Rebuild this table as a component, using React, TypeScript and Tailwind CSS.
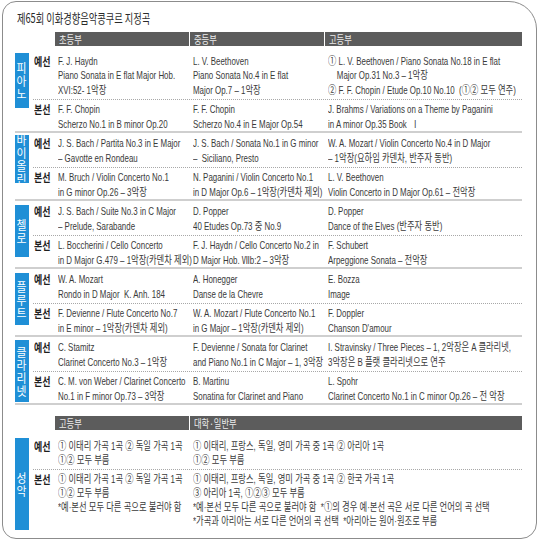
import React from "react";

type Row = { label: string; cols: string[][] };
type Group = { name: string[]; tabTop: number; tabH: number; rows: Row[] };

const groups: Group[] = [
  {
    name: ["피", "아", "노"],
    tabTop: 2,
    tabH: 55,
    rows: [
      {
        label: "예선",
        cols: [
          ["F. J. Haydn", "Piano Sonata in E flat Major Hob.", "XVI:52- 1악장"],
          ["L. V. Beethoven", "Piano Sonata No.4 in E flat", "Major Op.7 – 1악장"],
          [
            "① L. V. Beethoven / Piano Sonata No.18 in E flat",
            "    Major Op.31 No.3 – 1악장",
            "② F. F. Chopin / Etude Op.10 No.10  (①② 모두 연주)",
          ],
        ],
      },
      {
        label: "본선",
        cols: [
          ["F. F. Chopin", "Scherzo No.1 in B minor Op.20"],
          ["F. F. Chopin", "Scherzo No.4 in E Major Op.54"],
          ["J. Brahms / Variations on a Theme by Paganini", "in A minor Op.35 Book  Ⅰ"],
        ],
      },
    ],
  },
  {
    name: ["바", "이", "올", "린"],
    tabTop: 2,
    tabH: 48,
    rows: [
      {
        label: "예선",
        cols: [
          ["J. S. Bach / Partita No.3 in E Major", "– Gavotte en Rondeau"],
          ["J. S. Bach / Sonata No.1 in G minor", "–  Siciliano, Presto"],
          ["W. A. Mozart / Violin Concerto No.4 in D Major", "– 1악장(요하임 카덴차, 반주자 동반)"],
        ],
      },
      {
        label: "본선",
        cols: [
          ["M. Bruch / Violin Concerto No.1", "in G minor Op.26 – 3악장"],
          ["N. Paganini / Violin Concerto No.1", "in D Major Op.6 – 1악장(카덴차 제외)"],
          ["L. V. Beethoven", "Violin Concerto in D Major Op.61 – 전악장"],
        ],
      },
    ],
  },
  {
    name: ["첼", "로"],
    tabTop: 4,
    tabH: 52,
    rows: [
      {
        label: "예선",
        cols: [
          ["J. S. Bach / Suite No.3 in C Major", "– Prelude, Sarabande"],
          ["D. Popper", "40 Etudes Op.73 중 No.9"],
          ["D. Popper", "Dance of the Elves (반주자 동반)"],
        ],
      },
      {
        label: "본선",
        cols: [
          ["L. Boccherini / Cello Concerto", "in D Major G.479 – 1악장(카덴차 제외)"],
          ["F. J. Haydn / Cello Concerto No.2 in", "D Major Hob. Ⅶb:2 – 3악장"],
          ["F. Schubert", "Arpeggione Sonata – 전악장"],
        ],
      },
    ],
  },
  {
    name: ["플", "루", "트"],
    tabTop: 4,
    tabH: 52,
    rows: [
      {
        label: "예선",
        cols: [
          ["W. A. Mozart", "Rondo in D Major  K. Anh. 184"],
          ["A. Honegger", "Danse de la Chevre"],
          ["E. Bozza", "Image"],
        ],
      },
      {
        label: "본선",
        cols: [
          ["F. Devienne / Flute Concerto No.7", "in E minor – 1악장(카덴차 제외)"],
          ["W. A. Mozart / Flute Concerto No.1", "in G Major – 1악장(카덴차 제외)"],
          ["F. Doppler", "Chanson D'amour"],
        ],
      },
    ],
  },
  {
    name: ["클", "라", "리", "넷"],
    tabTop: 3,
    tabH: 62,
    rows: [
      {
        label: "예선",
        cols: [
          ["C. Stamitz", "Clarinet Concerto No.3 – 1악장"],
          ["F. Devienne / Sonata for Clarinet", "and Piano No.1 in C Major – 1, 3악장"],
          ["I. Stravinsky / Three Pieces – 1, 2악장은 A 클라리넷,", "3악장은 B 플랫 클라리넷으로 연주"],
        ],
      },
      {
        label: "본선",
        cols: [
          ["C. M. von Weber / Clarinet Concerto", "No.1 in F minor Op.73 – 3악장"],
          ["B. Martinu", "Sonatina for Clarinet and Piano"],
          ["L. Spohr", "Clarinet Concerto No.1 in C minor Op.26 – 전 악장"],
        ],
      },
    ],
  },
];

const vocalRows: Row[] = [
  {
    label: "예선",
    cols: [
      ["① 이태리 가곡 1곡 ② 독일 가곡 1곡", "①② 모두 부름"],
      ["① 이태리, 프랑스, 독일, 영미 가곡 중 1곡 ② 아리아 1곡", "①② 모두 부름"],
    ],
  },
  {
    label: "본선",
    cols: [
      ["① 이태리 가곡 1곡 ② 독일 가곡 1곡", "①② 모두 부름", "*예·본선 모두 다른 곡으로 불러야 함"],
      [
        "① 이태리, 프랑스, 독일, 영미 가곡 중 1곡 ② 한국 가곡 1곡",
        "③ 아리아 1곡, ①②③ 모두 부름",
        "*예·본선 모두 다른 곡으로 불러야 함  *①의 경우 예·본선 곡은 서로 다른 언어의 곡 선택",
        "*가곡과 아리아는 서로 다른 언어의 곡 선택  *아리아는 원어·원조로 부름",
      ],
    ],
  },
];

const HANGUL = /([\u3131-\u318E\uAC00-\uD7A3\u2460-\u2473]+)/;

function Txt({ s }: { s: string }) {
  const parts = s.split(HANGUL);
  return (
    <>
      {parts.map((p, i) =>
        i % 2 === 1 ? (
          <span key={i} className="text-[11.5px] leading-none font-['Noto_Sans_CJK_KR',sans-serif]">
            {p}
          </span>
        ) : (
          <React.Fragment key={i}>{p}</React.Fragment>
        )
      )}
    </>
  );
}

function Lines({ lines, lh }: { lines: string[]; lh: string }) {
  return (
    <div className="origin-left scale-x-[0.72] w-max">
      {lines.map((l, i) => (
        <div key={i} className={"whitespace-pre overflow-visible " + lh}>
          <Txt s={l} />
        </div>
      ))}
    </div>
  );
}

function Tab({ chars, top, h }: { chars: string[]; top: number; h: number }) {
  return (
    <div
      className="w-[14px] shrink-0 self-start bg-[#1f8fd6] flex flex-col items-center justify-center text-white text-[12px] font-['Noto_Sans_CJK_KR',sans-serif]"
      style={{ marginTop: top, height: h }}
    >
      {chars.map((c, i) => (
        <div key={i} className="h-[13px] leading-[13px] origin-center scale-x-[0.9]">
          {c}
        </div>
      ))}
    </div>
  );
}

function Label({ text, lh }: { text: string; lh: string }) {
  return (
    <div className={"w-[26px] shrink-0 pl-[5px] " + lh}>
      <div className="origin-left scale-x-[0.78] font-bold text-[#1e1e1e] text-[11.5px] font-['Noto_Sans_CJK_KR',sans-serif] whitespace-nowrap">
        {text}
      </div>
    </div>
  );
}

function RowLine({ r, first, lh, three }: { r: Row; first: boolean; lh: string; three: boolean }) {
  return (
    <div className="flex flex-col">
      {!first && <div className="ml-[4px] border-t border-dotted border-[#a8a8a8]" />}
      <div className={"flex " + (first ? "pb-[2px]" : "pt-[2px]")}>
        <Label text={r.label} lh={lh} />
        <div className="w-[135px] shrink-0 pl-[3px]">
          <Lines lines={r.cols[0]} lh={lh} />
        </div>
        {three ? (
          <>
            <div className="w-[135px] shrink-0 pl-[3px]">
              <Lines lines={r.cols[1]} lh={lh} />
            </div>
            <div className="flex-1 min-w-0 pl-[3px]">
              <Lines lines={r.cols[2]} lh={lh} />
            </div>
          </>
        ) : (
          <div className="flex-1 min-w-0 pl-[3px]">
            <Lines lines={r.cols[1]} lh={lh} />
          </div>
        )}
      </div>
    </div>
  );
}

function InstrumentGroup({ g }: { g: Group }) {
  return (
    <div className="flex border-b-2 border-[#cfcfcf]">
      <Tab chars={g.name} top={g.tabTop} h={g.tabH} />
      <div className="flex-1 min-w-0 flex flex-col pt-[3px]">
        {g.rows.map((r, ri) => (
          <RowLine key={ri} r={r} first={ri === 0} lh="h-[14.5px] leading-[14.5px]" three />
        ))}
      </div>
    </div>
  );
}

function HeaderBar({ cells }: { cells: { t: string; w?: string }[] }) {
  return (
    <div className="ml-[40px] flex gap-[1px] h-[14px] font-['Noto_Sans_CJK_KR',sans-serif] text-[11px] leading-[14px] text-[#ececec]">
      {cells.map((c, i) => (
        <div key={i} className={"bg-[#5c5c5c] pl-[4px] " + (c.w ?? "flex-1")}>
          <div className="origin-left scale-x-[0.75] whitespace-nowrap">{c.t}</div>
        </div>
      ))}
    </div>
  );
}

export default function App() {
  return (
    <div className="w-[540px] h-[541px] bg-white pt-[1px] pl-[2px]">
      <div className="w-[535px] h-[538px] overflow-hidden border-[1.5px] border-[#8c8c8c] rounded-tl-[14px] rounded-tr-[28px] rounded-bl-[14px] rounded-br-[16px] pl-[11.5px] pr-[14.5px] pt-[7.5px] text-[11px] text-[#3a3a3a] font-['Liberation_Sans','Noto_Sans_CJK_KR',sans-serif]">
        <div className="ml-[2px] h-[16px] leading-[16px] text-[13px] text-[#2a2a2a] font-['Noto_Sans_CJK_KR',sans-serif]">
          <div className="origin-left scale-x-[0.71] whitespace-nowrap">제65회 이화경향음악콩쿠르 지정곡</div>
        </div>
        <div className="mt-[6px]">
          <HeaderBar
            cells={[
              { t: "초등부", w: "w-[134px]" },
              { t: "중등부", w: "w-[134px]" },
              { t: "고등부" },
            ]}
          />
        </div>
        <div className="mt-[5px] flex flex-col">
          {groups.map((g, i) => (
            <InstrumentGroup key={i} g={g} />
          ))}
        </div>
        <div className="mt-[11px]">
          <HeaderBar
            cells={[
              { t: "고등부", w: "w-[134px]" },
              { t: "대학·일반부" },
            ]}
          />
        </div>
        <div className="mt-[6px] flex">
          <Tab chars={["성", "악"]} top={2} h={92} />
          <div className="flex-1 min-w-0 flex flex-col pt-[3px]">
            {vocalRows.map((r, ri) => (
              <RowLine key={ri} r={r} first={ri === 0} lh="h-[14px] leading-[14px]" three={false} />
            ))}
          </div>
        </div>
      </div>
    </div>
  );
}
